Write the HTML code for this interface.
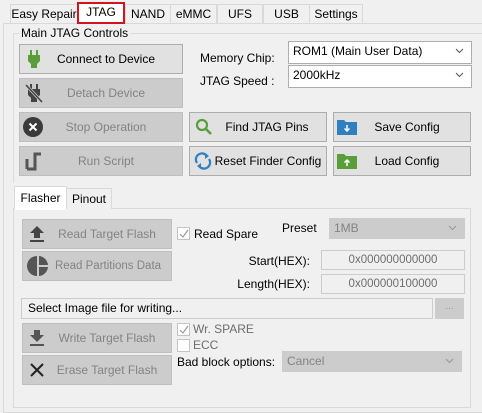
<!DOCTYPE html>
<html><head><style>
*{box-sizing:border-box;margin:0;padding:0}
body{width:482px;height:401px;background:#f0f0f0;font-family:"Liberation Sans",sans-serif;font-size:12px;color:#000;position:relative;overflow:hidden;white-space:nowrap}
.a{position:absolute}
.tab{position:absolute;top:4px;height:19px;border:1px solid #d9d9d9;border-bottom:none;background:#f0f0f0;text-align:center;line-height:18px;font-size:12px}
.btn{position:absolute;border:1px solid #adadad;background:#e1e1e1;font-size:12px;display:flex;align-items:center;justify-content:center}
.dis{background:#cccccc;border-color:#bfbfbf;color:#838383}
.ic{position:absolute;left:6px;top:50%;transform:translateY(-50%)}
.cb{position:absolute;border:1px solid #7a7a7a;background:#fff;padding-left:4px;line-height:20px;font-size:12px}
.cb.d{background:#cccccc;border-color:#cccccc;color:#838383}
.arr{position:absolute;right:7px;top:6px}
.inp{position:absolute;border:1px solid #ccc;background:#f0f0f0;color:#6d6d6d;text-align:center;line-height:18px;font-size:11.5px}
.chk{position:absolute;width:13px;height:13px;border:1px solid #c4c4c4;background:#fff}
</style></head><body>
<div class="a" style="left:3px;top:23px;width:490px;height:390px;border:1px solid #d9d9d9;background:#f0f0f0"></div>
<div class="tab" style="left:10px;width:68px">Easy Repair</div>
<div class="tab" style="left:125px;width:46px">NAND</div>
<div class="tab" style="left:170px;width:47px">eMMC</div>
<div class="tab" style="left:217px;width:46px">UFS</div>
<div class="tab" style="left:263px;width:47px">USB</div>
<div class="tab" style="left:309px;width:54px">Settings</div>
<div class="tab" style="left:77px;top:2px;width:48px;height:22px;border:2px solid #d6121e;background:#fff;line-height:17px">JTAG</div>

<div class="a" style="left:13px;top:33px;width:480px;height:150px;border:1px solid #dcdcdc;border-bottom:none"></div>
<div class="a" style="left:19px;top:26px;padding:0 2px;background:#f0f0f0;font-size:12px">Main JTAG Controls</div>

<div class="btn" style="left:19px;top:44px;width:164px;height:30px">
<svg class="ic" width="14" height="18" viewBox="0 0 14 18" style="left:7px"><rect x="3" y="0" width="2" height="5" fill="#5a9e3a"/><rect x="9" y="0" width="2" height="5" fill="#5a9e3a"/><path d="M1 5h12v6l-3 3v4H4v-4L1 11z" fill="#5a9e3a"/></svg>
<span style="margin-left:10px">Connect to Device</span></div>
<div class="btn dis" style="left:19px;top:78px;width:164px;height:30px">
<svg class="ic" width="18" height="20" viewBox="0 0 18 20" style="left:5px"><rect x="5" y="1" width="2" height="5" fill="#444"/><rect x="11" y="1" width="2" height="5" fill="#444"/><path d="M3 6h12v6l-3 3v4H6v-4L3 12z" fill="#444"/><path d="M1 2L17 19" stroke="#cccccc" stroke-width="3"/><path d="M1 2L17 19" stroke="#444" stroke-width="1.6"/></svg>
<span style="margin-left:10px">Detach Device</span></div>
<div class="btn dis" style="left:19px;top:112px;width:164px;height:30px">
<svg class="ic" width="20" height="20" viewBox="0 0 20 20" style="left:3px"><circle cx="10" cy="10" r="10" fill="#3a3a3a"/><path d="M6.5 6.5l7 7M13.5 6.5l-7 7" stroke="#fff" stroke-width="2"/></svg>
<span style="margin-left:10px">Stop Operation</span></div>
<div class="btn dis" style="left:19px;top:146px;width:164px;height:30px">
<svg class="ic" width="18" height="20" viewBox="0 0 18 20" style="left:5px"><path d="M2 18h8V3h6" fill="none" stroke="#555" stroke-width="3"/><path d="M2 18V8" stroke="#555" stroke-width="3"/></svg>
<span style="margin-left:10px">Run Script</span></div>

<div class="btn" style="left:189px;top:112px;width:138px;height:30px">
<svg class="ic" width="18" height="18" viewBox="0 0 18 18" style="left:5px"><circle cx="7" cy="7" r="5" fill="none" stroke="#5a9e3a" stroke-width="2.2"/><path d="M10.5 10.5L16 16" stroke="#5a9e3a" stroke-width="2.6"/></svg>
<span style="margin-left:18px">Find JTAG Pins</span></div>
<div class="btn" style="left:189px;top:146px;width:138px;height:30px">
<svg class="ic" width="18" height="18" viewBox="0 0 18 18" style="left:4px"><path d="M3 11A6 6 0 0 1 13 4" fill="none" stroke="#2f7fc1" stroke-width="2.2"/><path d="M11 1l4 3-4 3z" fill="#2f7fc1"/><path d="M15 7A6 6 0 0 1 5 14" fill="none" stroke="#2f7fc1" stroke-width="2.2"/><path d="M7 17l-4-3 4-3z" fill="#2f7fc1"/></svg>
<span style="margin-left:20px">Reset Finder Config</span></div>
<div class="btn" style="left:333px;top:112px;width:138px;height:30px">
<svg class="ic" width="20" height="16" viewBox="0 0 20 16" style="left:3px"><path d="M0 1h7l2 2h11v13H0z" fill="#2f7fc1"/><path d="M10 6v6M7.5 9.5L10 12l2.5-2.5" stroke="#fff" stroke-width="1.5" fill="none"/></svg>
<span style="margin-left:10px">Save Config</span></div>
<div class="btn" style="left:333px;top:146px;width:138px;height:30px">
<svg class="ic" width="20" height="16" viewBox="0 0 20 16" style="left:3px"><path d="M0 1h7l2 2h11v13H0z" fill="#5a9e3a"/><path d="M10 13V7M7.5 9.5L10 7l2.5 2.5" stroke="#fff" stroke-width="1.5" fill="none"/></svg>
<span style="margin-left:10px">Load Config</span></div>

<div class="a" style="left:200px;top:51px">Memory Chip:</div>
<div class="a" style="left:200px;top:74px">JTAG Speed :</div>
<div class="cb" style="left:288px;top:41px;width:184px;height:23px;border-color:#adadad;line-height:19px">ROM1 (Main User Data)<svg class="arr" width="9" height="6"><path d="M1 1l3.5 3.5L8 1" fill="none" stroke="#555"/></svg></div>
<div class="cb" style="left:288px;top:65px;width:184px;height:23px;border-color:#adadad;line-height:19px">2000kHz<svg class="arr" width="9" height="6"><path d="M1 1l3.5 3.5L8 1" fill="none" stroke="#555"/></svg></div>

<div class="a" style="left:13px;top:208px;width:458px;height:200px;border:1px solid #d9d9d9;background:#f0f0f0"></div>
<div class="tab" style="left:66px;top:188px;width:46px;height:21px;line-height:21px">Pinout</div>
<div class="tab" style="left:14px;top:186px;width:53px;height:23px;background:#fff;line-height:22px">Flasher</div>
<div class="a" style="left:15px;top:208px;width:51px;height:2px;background:#fff"></div>

<div class="btn dis" style="left:22px;top:219px;width:150px;height:30px">
<svg class="ic" width="16" height="18" viewBox="0 0 16 18" style="left:6px"><path d="M8 1l7 7h-4v5H5V8H1z" fill="#444"/><rect x="1" y="15" width="14" height="2" fill="#444"/></svg>
<span style="margin-left:20px">Read Target Flash</span></div>
<div class="btn dis" style="left:22px;top:251px;width:150px;height:30px">
<svg class="ic" width="22" height="22" viewBox="0 0 22 22" style="left:4px"><path d="M10 1A10 10 0 0 0 10 21z" fill="#555"/><path d="M12 1A10 10 0 0 1 21 10H12z" fill="#555"/><path d="M12 12h9A10 10 0 0 1 12 21z" fill="#555"/></svg>
<span style="margin-left:22px;font-size:11.5px">Read Partitions Data</span></div>

<div class="chk" style="left:177px;top:227px"></div>
<svg class="a" style="left:178px;top:228px" width="11" height="11"><path d="M2 6l3 3 5-7" fill="none" stroke="#999" stroke-width="1.2"/></svg>
<div class="a" style="left:194px;top:227px">Read Spare</div>
<div class="a" style="left:282px;top:221px">Preset</div>
<div class="cb d" style="left:329px;top:218px;width:136px;height:21px;line-height:19px">1MB<svg class="arr" width="9" height="6"><path d="M1 1l3.5 3.5L8 1" fill="none" stroke="#999"/></svg></div>

<div class="a" style="left:230px;top:254px;width:80px;text-align:right">Start(HEX):</div>
<div class="a" style="left:230px;top:277px;width:80px;text-align:right">Length(HEX):</div>
<div class="inp" style="left:321px;top:250px;width:144px;height:20px">0x000000000000</div>
<div class="inp" style="left:321px;top:274px;width:144px;height:20px">0x000000100000</div>

<div class="a" style="left:21px;top:298px;width:412px;height:21px;border:1px solid #ccc;background:#f0f0f0;padding-left:6px;line-height:19px">Select Image file for writing...</div>
<div class="a" style="left:435px;top:298px;width:29px;height:21px;background:#cccccc;color:#999;text-align:center;line-height:18px;font-size:10px">...</div>

<div class="btn dis" style="left:22px;top:323px;width:150px;height:30px">
<svg class="ic" width="16" height="18" viewBox="0 0 16 18" style="left:6px"><path d="M8 13l7-7h-4V1H5v5H1z" fill="#555"/><rect x="1" y="15" width="14" height="2" fill="#555"/></svg>
<span style="margin-left:20px">Write Target Flash</span></div>
<div class="btn dis" style="left:22px;top:355px;width:150px;height:30px">
<svg class="ic" width="16" height="16" viewBox="0 0 16 16" style="left:6px"><path d="M2 2l12 12M14 2L2 14" stroke="#222" stroke-width="2"/></svg>
<span style="margin-left:20px">Erase Target Flash</span></div>

<div class="chk" style="left:177px;top:323px"></div>
<svg class="a" style="left:178px;top:324px" width="11" height="11"><path d="M2 6l3 3 5-7" fill="none" stroke="#999" stroke-width="1.2"/></svg>
<div class="a" style="left:193px;top:322px;color:#6d6d6d">Wr. SPARE</div>
<div class="chk" style="left:177px;top:339px"></div>
<div class="a" style="left:193px;top:338px;color:#6d6d6d">ECC</div>
<div class="a" style="left:177px;top:355px">Bad block options:</div>
<div class="cb d" style="left:282px;top:351px;width:180px;height:21px;line-height:19px">Cancel<svg class="arr" width="9" height="6"><path d="M1 1l3.5 3.5L8 1" fill="none" stroke="#999"/></svg></div>
</body></html>
